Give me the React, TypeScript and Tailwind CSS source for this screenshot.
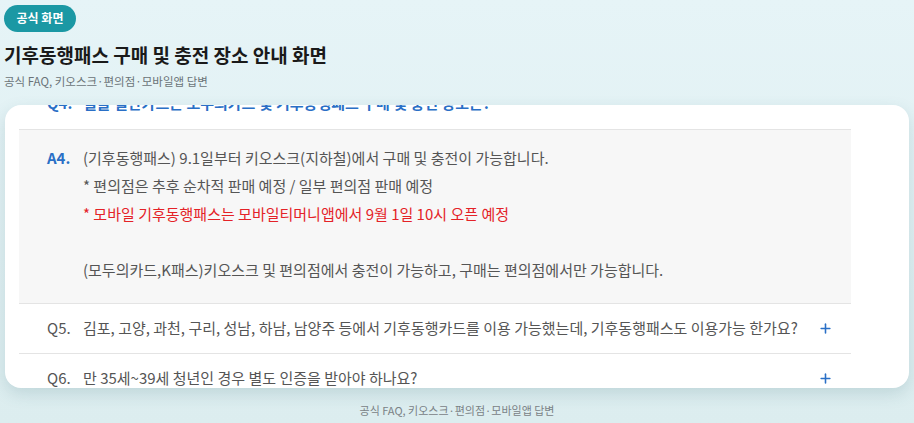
import { Plus } from 'lucide-react'

const answerLines = [
    { text: '(기후동행패스) 9.1일부터 키오스크(지하철)에서 구매 및 충전이 가능합니다.', tone: 'normal' },
    { text: '* 편의점은 추후 순차적 판매 예정 / 일부 편의점 판매 예정', tone: 'normal' },
    { text: '* 모바일 기후동행패스는 모바일티머니앱에서 9월 1일 10시 오픈 예정', tone: 'red' },
    { text: '', tone: 'normal' },
    { text: '(모두의카드,K패스)키오스크 및 편의점에서 충전이 가능하고, 구매는 편의점에서만 가능합니다.', tone: 'normal' },
]

const questions = [
    { label: 'Q5.', text: '김포, 고양, 과천, 구리, 성남, 하남, 남양주 등에서 기후동행카드를 이용 가능했는데, 기후동행패스도 이용가능 한가요?' },
    { label: 'Q6.', text: '만 35세~39세 청년인 경우 별도 인증을 받아야 하나요?' },
]

export default function App() {
    return (
        <div className="relative w-[914px] h-[423px] overflow-hidden bg-gradient-to-b from-[#e6f4f7] to-[#dcedef] font-['Noto_Sans_CJK_KR',sans-serif]">
            {/* Header */}
            <div className="px-[4px] pt-[4px]">
                <span className="inline-flex h-[27px] w-[72px] items-center justify-center rounded-full bg-[#1b98a4] text-[12px] font-bold text-white">
                    공식 화면
                </span>
                <h1 className="mt-[11px] text-[19px] leading-[24px] font-bold text-[#1a1a1a]">
                    기후동행패스 구매 및 충전 장소 안내 화면
                </h1>
                <p className="mt-[7px] text-[11.5px] leading-[14px] text-[#6b7378]">공식 FAQ, 키오스크·편의점·모바일앱 답변</p>
            </div>

            {/* Card */}
            <div className="mx-[5px] mt-[17px] h-[283px] overflow-hidden rounded-[16px] bg-white shadow-[0_6px_16px_rgba(60,110,120,0.18)]">
                <div className="ml-[14px] mt-[-26px] w-[832px]">
                    {/* Q4 (open, clipped at top) */}
                    <div className="flex h-[50px] items-center pl-[28px] text-[15px] font-semibold text-[#2a6fc6]">
                        <span className="w-[36px]">Q4.</span>
                        <span>실물 일반카드는 모두의카드 및 기후동행패스 구매 및 충전 장소는?</span>
                    </div>
                    {/* Answer */}
                    <div className="flex border-y border-[#e4e4e4] bg-[#f7f7f7] pt-[14px] pb-[19px] pl-[28px] text-[15px] leading-[28px] text-[#555]">
                        <span className="w-[36px] shrink-0 font-bold text-[#2a6fc6]">A4.</span>
                        <div>
                            {answerLines.map((line, i) => (
                                <p key={i} className={`h-[28px] ${line.tone === 'red' ? 'text-[#e42227]' : ''}`}>
                                    {line.text}
                                </p>
                            ))}
                        </div>
                    </div>
                    {/* Questions */}
                    {questions.map((q) => (
                        <div key={q.label} className="flex h-[50px] items-center border-b border-[#e4e4e4] pl-[28px] pr-[18px] text-[15px] text-[#555]">
                            <span className="w-[36px] shrink-0">{q.label}</span>
                            <span className="flex-1">{q.text}</span>
                            <Plus className="h-[15px] w-[15px] text-[#2a6fc6]" strokeWidth={2.5} />
                        </div>
                    ))}
                </div>
            </div>

            {/* Footer */}
            <p className="mt-[15px] text-center text-[11px] leading-[14px] text-[#7a8286]">공식 FAQ, 키오스크·편의점·모바일앱 답변</p>
        </div>
    )
}
